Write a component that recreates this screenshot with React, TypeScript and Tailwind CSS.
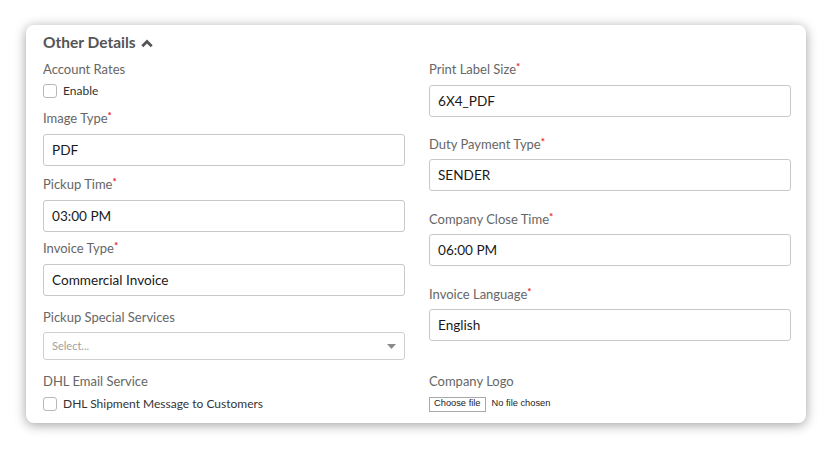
import React from 'react'

const font = { fontFamily: 'Lato, "Noto Sans", sans-serif' }

const Label: React.FC<{ text: string; required?: boolean; className?: string }> = ({
  text,
  required,
  className = '',
}) => (
  <div className={`h-4 text-[13px] leading-4 text-[#666] ${className}`}>
    {text}
    {required && (
      <span className="relative -top-[4px] text-[10px] font-bold leading-none text-[#e8202a]">*</span>
    )}
  </div>
)

const TextBox: React.FC<{ value: string; className?: string }> = ({ value, className = '' }) => (
  <div
    className={`flex h-[32px] items-center rounded-[3px] border border-[#c8c8c8] bg-white px-2 text-[13.6px] text-[#1a1a1a] ${className}`}
  >
    {value}
  </div>
)

const Check: React.FC<{ text: string; className?: string }> = ({ text, className = '' }) => (
  <label className={`flex h-4 items-center gap-[6px] text-[12px] text-[#333] ${className}`}>
    <span className="inline-block h-[14px] w-[14px] rounded-[3px] border border-[#b8b8b8] bg-white" />
    {text}
  </label>
)

const SelectBox: React.FC<{ className?: string }> = ({ className = '' }) => (
  <div
    className={`flex h-[28px] items-center justify-between rounded-[3px] border border-[#cfcfcf] bg-white pl-2 pr-[8px] text-[11px] text-[#a0a0a0] ${className}`}
  >
    <span>Select...</span>
    <svg width="9" height="5" viewBox="0 0 9 5">
      <path d="M0 0h9L4.5 5z" fill="#8a8a8a" />
    </svg>
  </div>
)

export default function App() {
  return (
    <div className="min-h-screen bg-white pl-[26px] pt-[25px]" style={font}>
      <div className="w-[780px] rounded-[8px] bg-white pb-[11px] pl-[17px] pr-[15px] pt-[8px] shadow-[0_2px_12px_rgba(0,0,0,0.38)]">
        <div className="flex h-5 items-center gap-[5px] text-[15.5px] font-bold text-[#555]">
          Other Details
          <svg width="12" height="9" viewBox="0 0 12 9">
            <path d="M1.3 7.3 6 2.6l4.7 4.7" fill="none" stroke="#555" strokeWidth="2.8" />
          </svg>
        </div>

        <div className="mt-[8px] grid grid-cols-2 gap-x-6">
          <div className="flex flex-col">
            <Label text="Account Rates" />
            <Check text="Enable" className="mt-[6px]" />
            <Label text="Image Type" required className="mt-[11px]" />
            <TextBox value="PDF" className="mt-[8px]" />
            <Label text="Pickup Time" required className="mt-[10px]" />
            <TextBox value="03:00 PM" className="mt-[8px]" />
            <Label text="Invoice Type" required className="mt-[8px]" />
            <TextBox value="Commercial Invoice" className="mt-[8px]" />
            <Label text="Pickup Special Services" className="mt-[13px]" />
            <SelectBox className="mt-[7px]" />
          </div>
          <div className="flex flex-col">
            <Label text="Print Label Size" required />
            <TextBox value="6X4_PDF" className="mt-[8px]" />
            <Label text="Duty Payment Type" required className="mt-[19px]" />
            <TextBox value="SENDER" className="mt-[7px]" />
            <Label text="Company Close Time" required className="mt-[20px]" />
            <TextBox value="06:00 PM" className="mt-[7px]" />
            <Label text="Invoice Language" required className="mt-[20px]" />
            <TextBox value="English" className="mt-[7px]" />
          </div>
        </div>

        <div className="mt-[13px] grid grid-cols-2 gap-x-6">
          <div>
            <Label text="DHL Email Service" />
            <Check text="DHL Shipment Message to Customers" className="mt-[7px]" />
          </div>
          <div>
            <Label text="Company Logo" />
            <div
              className="mt-[7px] flex h-4 items-center gap-[6px] text-[9.3px] text-[#222]"
              style={{ fontFamily: '"Liberation Sans", Arial, sans-serif' }}
            >
              <span className="flex h-[15px] items-center border border-[#a9a9a9] bg-white px-[4px]">
                Choose file
              </span>
              <span>No file chosen</span>
            </div>
          </div>
        </div>
      </div>
    </div>
  )
}
